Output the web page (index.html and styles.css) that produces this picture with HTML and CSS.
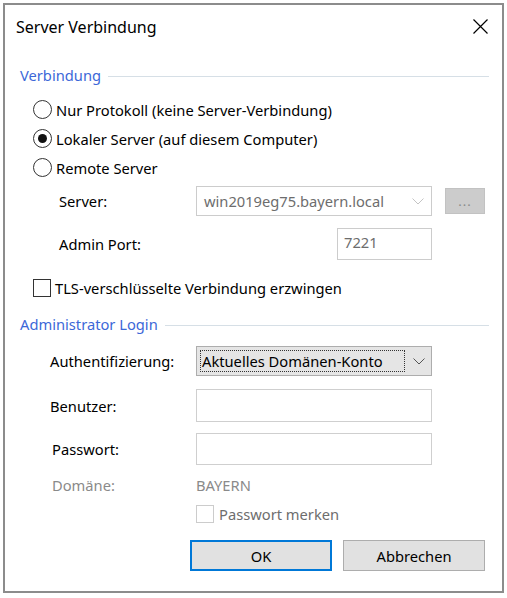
FILE: index.html
```html
<!DOCTYPE html>
<html lang="de">
<head>
<meta charset="utf-8">
<title>Server Verbindung</title>
<link rel="stylesheet" href="styles.css">
</head>
<body>
<div class="dialog">
  <div class="titlebar">
    <span class="title">Server Verbindung</span>
    <svg class="close" width="15" height="15" viewBox="0 0 15 15"><path d="M0.5 0.5 L14.5 14.5 M14.5 0.5 L0.5 14.5" stroke="#000" stroke-width="1.2" fill="none"/></svg>
  </div>
  <div class="content">
    <div class="group-head g1"><span class="gh-text">Verbindung</span><span class="gh-line"></span></div>
    <div class="radio-row r1"><span class="radio"></span><span>Nur Protokoll (keine Server-Verbindung)</span></div>
    <div class="radio-row"><span class="radio checked"></span><span>Lokaler Server (auf diesem Computer)</span></div>
    <div class="radio-row"><span class="radio"></span><span>Remote Server</span></div>

    <div class="field f-server">
      <span class="lbl lbl-a">Server:</span>
      <div class="combo disabled">
        <span class="combo-text">win2019eg75.bayern.local</span>
        <svg class="chev" width="12" height="7" viewBox="0 0 12 7"><path d="M0.5 0.5 L6 6 L11.5 0.5" stroke="#c4c4c4" stroke-width="1" fill="none"/></svg>
      </div>
      <div class="dots-btn">...</div>
    </div>
    <div class="field f-port">
      <span class="lbl lbl-a">Admin Port:</span>
      <div class="port-box">7221</div>
    </div>

    <div class="check-row tls"><span class="checkbox"></span><span>TLS-verschlüsselte Verbindung erzwingen</span></div>

    <div class="group-head g2"><span class="gh-text">Administrator Login</span><span class="gh-line"></span></div>

    <div class="field f-auth">
      <span class="lbl lbl-b">Authentifizierung:</span>
      <div class="combo active">
        <span class="focus-rect">Aktuelles Domänen-Konto</span>
        <svg class="chev" width="12" height="7" viewBox="0 0 12 7"><path d="M0.5 0.5 L6 6 L11.5 0.5" stroke="#555" stroke-width="1" fill="none"/></svg>
      </div>
    </div>
    <div class="field f-user">
      <span class="lbl lbl-b">Benutzer:</span>
      <div class="textbox"></div>
    </div>
    <div class="field f-pass">
      <span class="lbl lbl-c">Passwort:</span>
      <div class="textbox"></div>
    </div>
    <div class="field f-domain">
      <span class="lbl lbl-c muted">Domäne:</span>
      <span class="muted">BAYERN</span>
    </div>
    <div class="field f-remember">
      <span class="checkbox disabled"></span><span class="dis-text">Passwort merken</span>
    </div>

    <div class="buttons">
      <div class="btn default">OK</div>
      <div class="btn">Abbrechen</div>
    </div>
  </div>
</div>
</body>
</html>
```

FILE: styles.css
```css
* { box-sizing: border-box; }
html, body { margin: 0; padding: 0; background: #fff; }
body {
  font-family: "Noto Sans", "Open Sans", sans-serif;
  font-size: 14.7px;
  color: #000;
}
.dialog {
  margin: 3px;
  width: 501px;
  height: 590px;
  border: 2px solid #8c8c8c;
  background: #fff;
}
.titlebar {
  height: 44px;
  display: flex;
  align-items: center;
  justify-content: space-between;
  padding: 0 14px 0 11px;
}
.title { font-size: 16px; }
.close { display: block; margin-top: -1px; }
.content { padding: 0 13px 0 15px; }

.group-head {
  display: flex;
  align-items: center;
  height: 20px;
  gap: 7px;
}
.g1 { margin-top: 16px; }
.g2 { margin-top: 15px; }
.gh-text { color: #3c68d8; white-space: nowrap; }
.gh-line { flex: 1; height: 1px; background: #d6dfe6; margin-top: 2px; }

.radio-row {
  height: 29px;
  display: flex;
  align-items: center;
  gap: 4px;
  margin-left: 13px;
}
.r1 { margin-top: 10px; }
.radio {
  width: 19px;
  height: 19px;
  border: 1.5px solid #333;
  border-radius: 50%;
  display: flex;
  align-items: center;
  justify-content: center;
  flex: none;
}
.radio.checked::after {
  content: "";
  width: 9px;
  height: 9px;
  border-radius: 50%;
  background: #111;
}

.field { display: flex; align-items: center; }
.lbl { flex: none; }
.lbl-a { width: 176px; padding-left: 39px; }
.lbl-b { width: 176px; padding-left: 30px; }
.lbl-c { width: 176px; padding-left: 32px; }

.f-server { height: 30px; margin-top: 4px; }
.combo {
  width: 236px;
  height: 100%;
  display: flex;
  align-items: center;
  justify-content: space-between;
  padding: 0 7px 0 7px;
}
.combo.disabled { border: 1px solid #cccccc; background: #fff; color: #6d6d6d; }
.combo-text { white-space: nowrap; }
.chev { display: block; flex: none; }
.dots-btn {
  margin-left: 13px;
  width: 40px;
  height: 26px;
  background: #cccccc;
  border: 1px solid #c2c2c2;
  color: #8a8a8a;
  font-size: 13px;
  display: flex;
  align-items: flex-end;
  justify-content: center;
  letter-spacing: 1px;
  padding-bottom: 3px;
}
.f-port { height: 32px; margin-top: 12px; }
.port-box {
  margin-left: 141px;
  width: 95px;
  height: 32px;
  border: 1px solid #cccccc;
  color: #6d6d6d;
  padding: 3px 0 0 6px;
}

.check-row {
  display: flex;
  align-items: center;
  gap: 4px;
  height: 22px;
  margin-left: 13px;
}
.tls { margin-top: 17px; }
.checkbox {
  width: 18px;
  height: 18px;
  border: 1.5px solid #333;
  flex: none;
}
.checkbox.disabled { border: 1px solid #cccccc; }

.f-auth { height: 30px; margin-top: 12px; }
.combo.active {
  background: #e5e5e5;
  border: 1px solid #adadad;
  padding: 3px 6px 3px 3px;
}
.focus-rect {
  height: 100%;
  width: 205px;
  border: 1px dotted #333;
  display: flex;
  align-items: center;
  padding-left: 1px;
  white-space: nowrap;
}
.f-user { height: 33px; margin-top: 13px; }
.f-pass { height: 32px; margin-top: 11px; }
.textbox {
  width: 236px;
  height: 100%;
  border: 1px solid #cfcfcf;
  background: #fff;
}
.f-domain { height: 20px; margin-top: 10px; }
.muted { color: #8a8a8a; }
.f-remember { height: 20px; margin-top: 9px; padding-left: 176px; gap: 5px; }
.dis-text { color: #6d6d6d; }

.buttons {
  display: flex;
  gap: 11px;
  margin-top: 16px;
  padding-left: 170px;
}
.btn {
  width: 142px;
  height: 31px;
  background: #e1e1e1;
  border: 1px solid #adadad;
  display: flex;
  align-items: center;
  justify-content: center;
}
.btn.default { border: 2px solid #0078d7; }
```
